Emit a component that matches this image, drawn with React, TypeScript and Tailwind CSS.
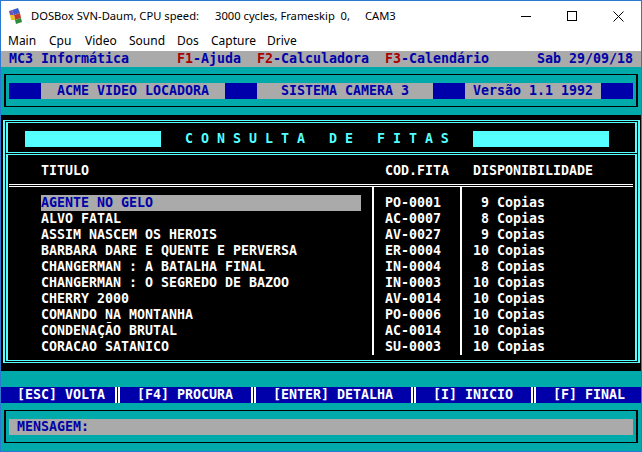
import React from "react";

// DOS text mode: 80x25 cells of 8x16 px
const MONO =
	"font-['DejaVu_Sans_Mono',monospace] font-bold text-[13.29px] leading-4 whitespace-pre";

const FITAS: [string, string, string][] = [
	["AGENTE NO GELO", "PO-0001", " 9"],
	["ALVO FATAL", "AC-0007", " 8"],
	["ASSIM NASCEM OS HEROIS", "AV-0027", " 9"],
	["BARBARA DARE E QUENTE E PERVERSA", "ER-0004", "10"],
	["CHANGERMAN : A BATALHA FINAL", "IN-0004", " 8"],
	["CHANGERMAN : O SEGREDO DE BAZOO", "IN-0003", "10"],
	["CHERRY 2000", "AV-0014", "10"],
	["COMANDO NA MONTANHA", "PO-0006", "10"],
	["CONDENAÇÃO BRUTAL", "AC-0014", "10"],
	["CORACAO SATANICO", "SU-0003", "10"],
];

const Sep = () => (
	<div className="w-2 h-4">
		<div className="ml-[2px] w-[5px] h-4 border-x-2 border-white" />
	</div>
);

const TitleBar = () => (
	<div className="h-[30px] flex items-center bg-white text-[11.2px] text-black font-['Noto_Sans',sans-serif]">
		<div className="w-[30px] shrink-0 pl-[8px] flex items-center">
			<svg width="14" height="16" viewBox="0 0 14 16">
				<path d="M3 2 L9 0 L11 5 L5 7 Z" fill="#3a5fcd" />
				<path d="M5 7 L11 5 L12 10 L6 12 Z" fill="#c0392b" />
				<path d="M1 7 L5 7 L6 12 L2 12 Z" fill="#e8c21a" />
				<path d="M6 12 L12 10 L13 14 L7 16 Z" fill="#2e8b3a" />
				<path d="M0 3 L3 2 L5 7 L1 7 Z" fill="#7a4fb0" />
			</svg>
		</div>
		<span className="w-[184px] shrink-0 whitespace-nowrap">DOSBox SVN-Daum, CPU speed:</span>
		<span className="w-[150px] shrink-0 whitespace-pre">3000 cycles, Frameskip  0,</span>
		<span>CAM3</span>
		<div className="ml-auto flex h-[30px]">
			<div className="w-[46px] flex items-center justify-center">
				<svg width="10" height="10" viewBox="0 0 10 10">
					<path d="M0 5.5 H10" stroke="#000" strokeWidth="1" />
				</svg>
			</div>
			<div className="w-[46px] flex items-center justify-center">
				<svg width="10" height="10" viewBox="0 0 10 10">
					<rect x="0.5" y="0.5" width="9" height="9" fill="none" stroke="#000" strokeWidth="1" />
				</svg>
			</div>
			<div className="w-[46px] flex items-center justify-center">
				<svg width="11" height="11" viewBox="0 0 11 11">
					<path d="M0.5 0.5 L10.5 10.5 M10.5 0.5 L0.5 10.5" stroke="#000" strokeWidth="1" />
				</svg>
			</div>
		</div>
	</div>
);

const MenuBar = () => (
	<div className="h-5 flex items-center bg-white pl-[7px] text-[12px] text-black font-['Noto_Sans',sans-serif]">
		<span className="w-[41px]">Main</span>
		<span className="w-[36px]">Cpu</span>
		<span className="w-[44px]">Video</span>
		<span className="w-[48px]">Sound</span>
		<span className="w-[34px]">Dos</span>
		<span className="w-[56px]">Capture</span>
		<span>Drive</span>
	</div>
);

const DosScreen = () => (
	<div className={`w-[640px] h-[400px] bg-[#00aaaa] flex flex-col ${MONO}`}>
		{/* linha de status */}
		<div className="h-4 flex bg-[#aaaaaa] text-[#0000aa]">
			<div className="w-[176px] pl-2">MC3 Informática</div>
			<div className="w-[80px]">
				<span className="text-[#aa0000]">F1</span>-Ajuda
			</div>
			<div className="w-[128px]">
				<span className="text-[#aa0000]">F2</span>-Calculadora
			</div>
			<div className="w-[152px]">
				<span className="text-[#aa0000]">F3</span>-Calendário
			</div>
			<div>Sab 29/09/18</div>
		</div>

		{/* cabeçalho */}
		<div className="h-12 pt-[7px] px-[3px]">
			<div className="h-[33px] border-black border-x-2 border-y pt-2 pl-[3px]">
				<div className="flex h-4">
					<div className="w-8 bg-[#0000aa]" />
					<div className="w-[184px] pl-4 bg-[#aaaaaa] text-[#0000aa]">ACME VIDEO LOCADORA</div>
					<div className="w-8 bg-[#0000aa]" />
					<div className="w-[176px] pl-6 bg-[#aaaaaa] text-[#0000aa]">SISTEMA CAMERA 3</div>
					<div className="w-8 bg-[#0000aa]" />
					<div className="w-[136px] pl-2 bg-[#aaaaaa] text-[#0000aa]">Versão 1.1 1992</div>
					<div className="w-8 bg-[#0000aa]" />
				</div>
			</div>
		</div>

		{/* consulta */}
		<div className="h-64 bg-black pt-[5px] pl-[2px] pr-px">
			<div className="h-[243px] border-[#55ffff] border-x-2 border-y p-px flex flex-col gap-px">
				<div className="h-[31px] border-[#55ffff] border-x-2 border-y pt-2 pl-[17px] flex items-start">
					<div className="w-[136px] h-4 bg-[#55ffff]" />
					<div className="w-[264px] h-4 ml-6 text-[#55ffff]">C O N S U L T A   D E   F I T A S</div>
					<div className="w-[136px] h-4 ml-6 bg-[#55ffff]" />
				</div>
				<div className="h-[207px] border-[#55ffff] border-x-2 border-y pt-2 text-white">
					<div className="flex h-4">
						<div className="w-[364px] pl-[33px]">TITULO</div>
						<div className="w-[88px] pl-[13px]">COD.FITA</div>
						<div className="pl-[13px]">DISPONIBILIDADE</div>
					</div>
					<div className="h-2 pt-[5px] pl-px">
						<div className="w-[624px] h-[3px] border-y border-white" />
					</div>
					<div className="flex">
						<div className="w-[364px] pt-2">
							{FITAS.map(([titulo], idx) => (
								<div
									key={titulo}
									className={
										idx === 0
											? "ml-[33px] w-[320px] h-4 bg-[#aaaaaa] text-[#0000aa]"
											: "ml-[33px] h-4"
									}
								>
									{titulo}
								</div>
							))}
						</div>
						<div className="w-[88px] pt-2 pl-[11px] border-l-2 border-white">
							{FITAS.map(([titulo, cod]) => (
								<div key={titulo} className="h-4">
									{cod}
								</div>
							))}
						</div>
						<div className="pt-2 pl-[11px] border-l-2 border-white">
							{FITAS.map(([titulo, , qtd]) => (
								<div key={titulo} className="h-4 pr-4">
									{qtd} Copias
								</div>
							))}
						</div>
					</div>
				</div>
			</div>
		</div>

		<div className="h-4" />

		{/* teclas */}
		<div className="h-4 flex bg-[#0000aa] text-white">
			<div className="w-[112px] pl-4">[ESC] VOLTA</div>
			<Sep />
			<div className="w-[128px] pl-4">[F4] PROCURA</div>
			<Sep />
			<div className="w-[152px] pl-4">[ENTER] DETALHA</div>
			<Sep />
			<div className="w-[112px] pl-4">[I] INICIO</div>
			<Sep />
			<div className="w-[104px] pl-4">[F] FINAL</div>
		</div>

		{/* mensagem */}
		<div className="h-12 pt-[7px] px-[3px]">
			<div className="h-[33px] border-black border-x-2 border-y pt-2 pl-[3px]">
				<div className="w-[624px] h-4 pl-2 bg-[#aaaaaa] text-[#0000aa]">MENSAGEM:</div>
			</div>
		</div>
	</div>
);

export default function App() {
	return (
		<div className="w-[642px] h-[452px] border border-[#2b79d0] bg-white flex flex-col overflow-hidden">
			<TitleBar />
			<MenuBar />
			<DosScreen />
		</div>
	);
}
